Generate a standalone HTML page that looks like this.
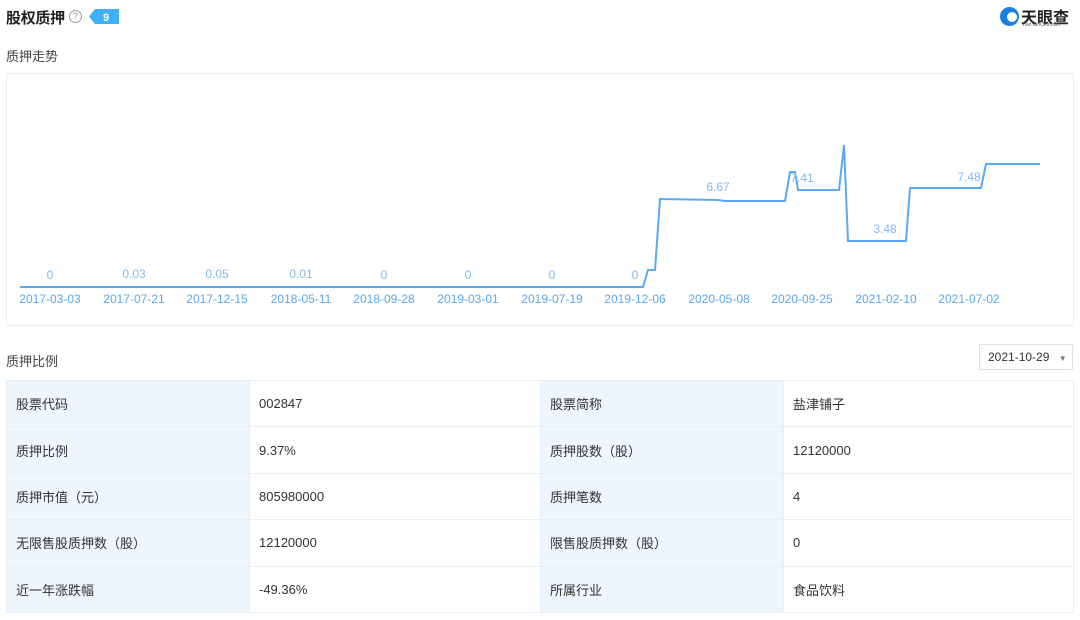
<!DOCTYPE html>
<html><head><meta charset="utf-8"><style>
body{margin:0;width:1080px;height:620px;background:#fff;font-family:"Liberation Sans","Noto Sans CJK SC",sans-serif;position:relative;overflow:hidden;color:#333}
.a{position:absolute}
table{position:absolute;left:6px;top:380px;border-collapse:collapse;width:1068px;font-size:13px;color:#333}
td{border:1px solid #e6eef6;height:46.4px;padding:0 0 0 9px;box-sizing:border-box}
td.l{background:#eef5fc}
</style></head><body>
<div class="a" style="left:6px;top:7px;font-size:15px;font-weight:bold;color:#222;letter-spacing:-0.3px">股权质押</div>
<div class="a" style="left:69px;top:10px;width:11px;height:11px;border:1px solid #999;border-radius:50%;font-size:9px;line-height:11px;text-align:center;color:#999">?</div>
<svg class="a" style="left:89px;top:9px" width="30" height="15"><path d="M6 0H30V15H6L0 7.5Z" fill="#3fb0f5"/><text x="17" y="12" font-size="11" fill="#fff" text-anchor="middle" font-family="Liberation Sans" font-weight="bold">9</text></svg>
<div class="a" style="left:1000px;top:7px;width:19px;height:19px;border-radius:50%;background:#1a7fe0"></div>
<div class="a" style="left:1007px;top:12px;width:10px;height:10px;border-radius:50%;background:#fff"></div>
<div class="a" style="left:1021px;top:4px;font-size:16px;font-weight:bold;color:#222">天眼查</div>
<div class="a" style="left:1022px;top:22px;font-size:5px;color:#555">TianYanCha.com</div>
<div class="a" style="left:6px;top:46px;font-size:13px;color:#444">质押走势</div>
<div class="a" style="left:6px;top:73px;width:1066px;height:251px;border:1px solid #e6eef6"></div>
<svg class="a" style="left:0;top:0" width="1080" height="330" font-family="Liberation Sans" font-size="12" fill="#5aa8f0" text-anchor="middle">
<polyline fill="none" stroke="#5ba9f5" stroke-width="2" points="20,287 643,287 648,270 655,270 660,199 718,200 725,201 785,201 790,172 795,172 798,190 839,190 844,145 848,241 906,241 910,188 981,188 986,164 1040,164"/>
<g fill="#7fbcf3"><text x="50" y="279">0</text><text x="134" y="278">0.03</text><text x="217" y="278">0.05</text><text x="301" y="278">0.01</text><text x="384" y="279">0</text><text x="468" y="279">0</text><text x="552" y="279">0</text><text x="635" y="279">0</text><text x="718" y="191">6.67</text><text x="802" y="182">7.41</text><text x="885" y="233">3.48</text><text x="969" y="181">7.48</text></g>
<g><text x="50" y="303">2017-03-03</text><text x="134" y="303">2017-07-21</text><text x="217" y="303">2017-12-15</text><text x="301" y="303">2018-05-11</text><text x="384" y="303">2018-09-28</text><text x="468" y="303">2019-03-01</text><text x="552" y="303">2019-07-19</text><text x="635" y="303">2019-12-06</text><text x="719" y="303">2020-05-08</text><text x="802" y="303">2020-09-25</text><text x="886" y="303">2021-02-10</text><text x="969" y="303">2021-07-02</text></g>
</svg>
<div class="a" style="left:6px;top:351px;font-size:13px;color:#444">质押比例</div>
<div class="a" style="left:979px;top:344px;width:94px;height:26px;border:1px solid #e0e0e0;border-radius:2px;box-sizing:border-box;font-size:12px;line-height:24px;padding-left:8px;color:#333">2021-10-29 <span style="font-size:8px;color:#777;margin-left:6px">▼</span></div>
<table>
<tr><td class="l" style="width:243px">股票代码</td><td style="width:291px">002847</td><td class="l" style="width:243px">股票简称</td><td>盐津铺子</td></tr>
<tr><td class="l">质押比例</td><td>9.37%</td><td class="l">质押股数（股）</td><td>12120000</td></tr>
<tr><td class="l">质押市值（元）</td><td>805980000</td><td class="l">质押笔数</td><td>4</td></tr>
<tr><td class="l">无限售股质押数（股）</td><td>12120000</td><td class="l">限售股质押数（股）</td><td>0</td></tr>
<tr><td class="l">近一年涨跌幅</td><td>-49.36%</td><td class="l">所属行业</td><td>食品饮料</td></tr>
</table>
</body></html>
